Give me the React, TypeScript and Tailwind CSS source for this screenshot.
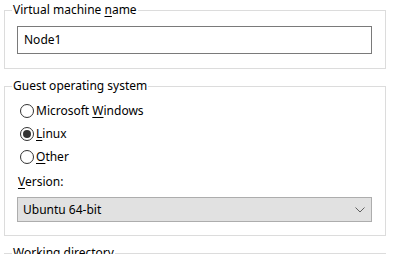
import { useState } from 'react'

const font = { fontFamily: '"Segoe UI", "Noto Sans", Roboto, sans-serif' }

function Mn({ children }: { children: string }) {
    return <span className="underline underline-offset-2">{children}</span>
}

function Radio({ checked, onClick, children }: { checked?: boolean; onClick: () => void; children: React.ReactNode }) {
    return (
        <div className="flex h-[23px] items-center gap-[2px] cursor-default" onClick={onClick}>
            <span className="flex h-[14px] w-[14px] shrink-0 items-center justify-center rounded-full border border-[#333333] bg-white">
                {checked && <span className="h-[8px] w-[8px] rounded-full bg-[#333333]" />}
            </span>
            <span>{children}</span>
        </div>
    )
}

export default function App() {
    const [os, setOs] = useState('linux')

    return (
        <div className="h-[254px] w-[396px] overflow-hidden bg-white text-[12px] leading-[16px] text-black" style={font}>
            <div className="pl-[4px] pr-[10px] pt-[2px]">
                {/* Name */}
                <fieldset className="border border-[#dcdcdc] px-0 pb-[14px]">
                    <legend className="ml-[7px] px-[1px]">Virtual machine <Mn>n</Mn>ame</legend>
                    <div className="mt-[8px] ml-[12px] mr-[13px] flex h-[28px] items-center border border-[#7a7a7a] px-[6px]">
                        Node1
                    </div>
                </fieldset>

                {/* Guest OS */}
                <fieldset className="mt-[9px] border border-[#dcdcdc] px-0 pb-[13px]">
                    <legend className="ml-[7px] px-[1px]">Guest operating system</legend>
                    <div className="mt-[5px] ml-[15px]">
                        <Radio checked={os === 'win'} onClick={() => setOs('win')}>Microsoft <Mn>W</Mn>indows</Radio>
                        <Radio checked={os === 'linux'} onClick={() => setOs('linux')}><Mn>L</Mn>inux</Radio>
                        <Radio checked={os === 'other'} onClick={() => setOs('other')}><Mn>O</Mn>ther</Radio>
                    </div>
                    <div className="mt-[6px] ml-[13px]"><Mn>V</Mn>ersion:</div>
                    <div className="mt-[7px] ml-[12px] mr-[13px] flex h-[25px] items-center justify-between border border-[#adadad] bg-[#e1e1e1] pl-[5px] pr-[5px]">
                        <span>Ubuntu 64-bit</span>
                        <svg width="10" height="6" viewBox="0 0 10 6" className="mr-[1px]">
                            <path d="M0.5 0.5 L5 5 L9.5 0.5" fill="none" stroke="#606060" strokeWidth="1" />
                        </svg>
                    </div>
                </fieldset>

                {/* Working directory */}
                <fieldset className="mt-[9px] h-[40px] border border-[#dcdcdc] px-0">
                    <legend className="ml-[7px] px-[1px]">Working directory</legend>
                </fieldset>
            </div>
        </div>
    )
}
